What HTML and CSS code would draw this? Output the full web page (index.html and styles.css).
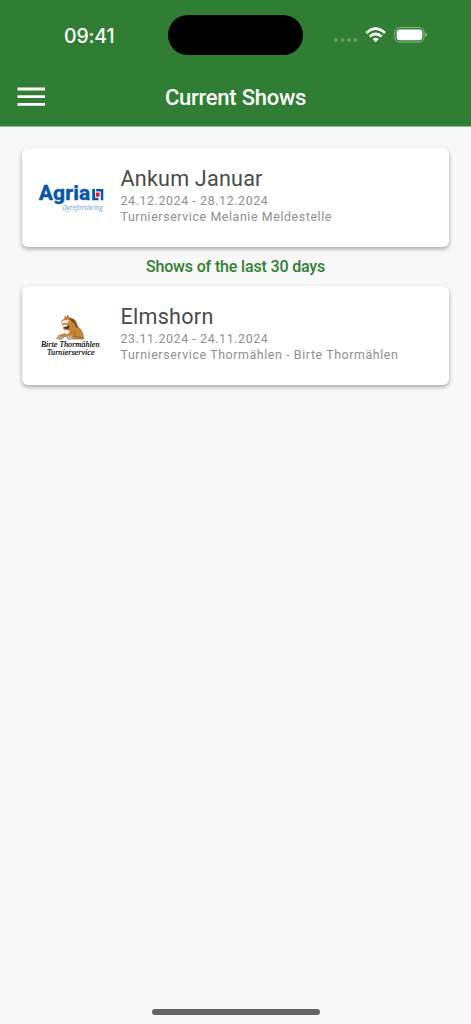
FILE: index.html
```html
<!DOCTYPE html>
<html lang="en">
<head>
<meta charset="utf-8">
<title>Current Shows</title>
<link rel="stylesheet" href="styles.css">
</head>
<body>
<div class="screen">
  <header class="header">
    <div class="status">
      <span class="clock">09:41</span>
      <span class="island"></span>
      <svg class="indicators" width="96" height="20" viewBox="0 0 96 20">
        <g fill="#fff" opacity=".25"><circle cx="3" cy="15" r="2"/><circle cx="9.5" cy="15" r="2"/><circle cx="16" cy="15" r="2"/><circle cx="22.3" cy="15" r="2"/></g>
        <g fill="none" stroke="#fff" stroke-width="2.7"><path d="M33.4 8Q42.7-.6 52 8"/><path d="M36.7 11.6Q42.7 6.4 48.7 11.6"/></g>
        <path d="M39.6 14Q42.7 11.6 45.8 14L42.7 17.2Z" fill="#fff"/>
        <rect x="61.8" y="2.6" width="29.2" height="14.4" rx="4.6" fill="none" stroke="#fff" stroke-opacity=".45"/>
        <rect x="63.7" y="4.5" width="25.6" height="10.8" rx="3" fill="#fff"/>
        <path d="M92.3 7.5Q94 8.3 94 9.8T92.3 12.1Z" fill="#fff" opacity=".5"/>
      </svg>
    </div>
    <div class="toolbar">
      <svg class="menu" width="28" height="20" viewBox="0 0 28 20"><path d="M.5 2H28M.5 9.7H28M.5 17.3H28" stroke="#fff" stroke-width="2.8"/></svg>
      <h1 class="title">Current Shows</h1>
    </div>
  </header>
  <main class="content">
    <article class="card">
      <svg class="logo" width="70" height="50" viewBox="0 0 70 50">
        <text class="agria" x=".8" y="28.4" textLength="51.4" lengthAdjust="spacing">Agria</text>
        <path d="M54.2 17H57V25.8H60.5V28.3H54.2ZM58.2 17H65.3V28.3H62.8V19.5H58.2Z" fill="#0759a8"/>
        <rect x="57.8" y="20.6" width="3.8" height="4" fill="#e2142d"/>
        <text class="agria-sub" x="24.5" y="37.8" textLength="40.5" lengthAdjust="spacingAndGlyphs">Dyreforsikring</text>
      </svg>
      <div class="info">
        <h2 class="name">Ankum Januar</h2>
        <p class="detail">24.12.2024 - 28.12.2024</p>
        <p class="detail">Turnierservice Melanie Meldestelle</p>
      </div>
    </article>
    <h3 class="section">Shows of the last 30 days</h3>
    <article class="card">
      <svg class="logo" width="70" height="50" viewBox="0 0 70 50">
        <path d="M23.5 11L27 8.5L26.8 6.5L29 7.5L29.6 5L31.6 8C37 8.5 38.5 12 39.5 16.5C43 19 45 22 45.6 29H30L28 25.5L32 22.5L31 20L26 19.5Z" fill="#c88532" stroke="#8c5c2a" stroke-width=".6"/>
        <path d="M31 8Q37 8 38.5 15L40.5 18L37.5 17L36.7 13.5L33.5 11Z" fill="#754327"/>
        <path d="M23.5 11.5Q27 9.4 31.4 10.4L30 12.5L24 13.4Z" fill="#faf0df"/>
        <path d="M25.5 16.5L31.5 15.5L30.8 19L27 18.8Z" fill="#553324"/>
        <path d="M24.3 15.2L28.7 14.5L29.6 16.2L25.3 17Z" fill="#fff"/>
        <path d="M20.5 25L27.5 23L29.5 26L25 28L19 28Z" fill="#c88532"/>
        <ellipse cx="21.8" cy="28" rx="3.6" ry="1.8" fill="#a8aa9c"/><ellipse cx="31.5" cy="27.6" rx="3.2" ry="2.1" fill="#b4b5a8"/>
        <path d="M36 21Q36 24 38 25M35 26L45 28" fill="none" stroke="#915b29" stroke-width=".8"/>
        <text class="script" x="3" y="37.4" textLength="58.5" lengthAdjust="spacingAndGlyphs">Birte Thormählen</text>
        <text class="script" x="9" y="44.8" textLength="47.5" lengthAdjust="spacingAndGlyphs">Turnierservice</text>
      </svg>
      <div class="info">
        <h2 class="name elmshorn">Elmshorn</h2>
        <p class="detail">23.11.2024 - 24.11.2024</p>
        <p class="detail">Turnierservice Thormählen - Birte Thormählen</p>
      </div>
    </article>
  </main>
  <div class="home-indicator"></div>
</div>
</body>
</html>
```
FILE: styles.css
```css
* { box-sizing: border-box; }
body { margin: 0; background: #f8f8f8; font-family: Roboto, sans-serif; }
h1, h2, h3, p { margin: 0; }
svg { display: block; }
.screen { height: 1024px; display: flex; flex-direction: column; }
.header { height: 127px; background: #2f7e33; border-bottom: 1px solid #97be99; color: #fff; }
.status { height: 70px; display: grid; grid-template-columns: 168px 135px 168px; align-items: center; }
.clock { padding: 1px 0 0 64px; font: 500 19.5px/24px Inter, sans-serif; letter-spacing: -.15px; }
.island { height: 40px; border-radius: 20px; background: #000; }
.indicators { margin-left: 30px; }
.toolbar { height: 54px; padding: 0 17px; display: grid; grid-template-columns: 28px 1fr 28px; align-items: center; }
.title { padding-top: 1px; text-align: center; font-size: 22px; line-height: 28px; font-weight: 500; letter-spacing: -.25px; white-space: nowrap; }
.content { flex: 1; padding: 21px 22px; }
.card { height: 98.5px; padding: 17px 16px; display: flex; gap: 12.5px; background: #fff; border-radius: 6px; box-shadow: 0 2px 4px rgba(0, 0, 0, .34); }
.logo { margin-top: 7px; flex: none; }
.info { color: #8f8f8f; white-space: nowrap; }
.name { font-size: 21.6px; line-height: 27.5px; font-weight: 400; letter-spacing: .2px; color: #4a4a4a; }
.elmshorn { letter-spacing: .25px; }
.detail { font-size: 12.4px; line-height: 16px; letter-spacing: .6px; }
.section { height: 39.5px; line-height: 39px; text-align: center; color: #2f7e33; font-size: 16px; font-weight: 500; letter-spacing: -.16px; }
.home-indicator { width: 168px; height: 6px; margin: 0 auto 9px; border-radius: 3px; background: #626562; }
.agria { font: 800 21px Roboto, sans-serif; fill: #0759a8; stroke: #0759a8; stroke-width: .3px; }
.agria-sub { font: italic 400 7px "Open Sans", sans-serif; fill: #5f9bd3; }
.script { font: italic 400 7.6px "Liberation Serif", serif; fill: #000; stroke: #000; stroke-width: .15px; }
```
